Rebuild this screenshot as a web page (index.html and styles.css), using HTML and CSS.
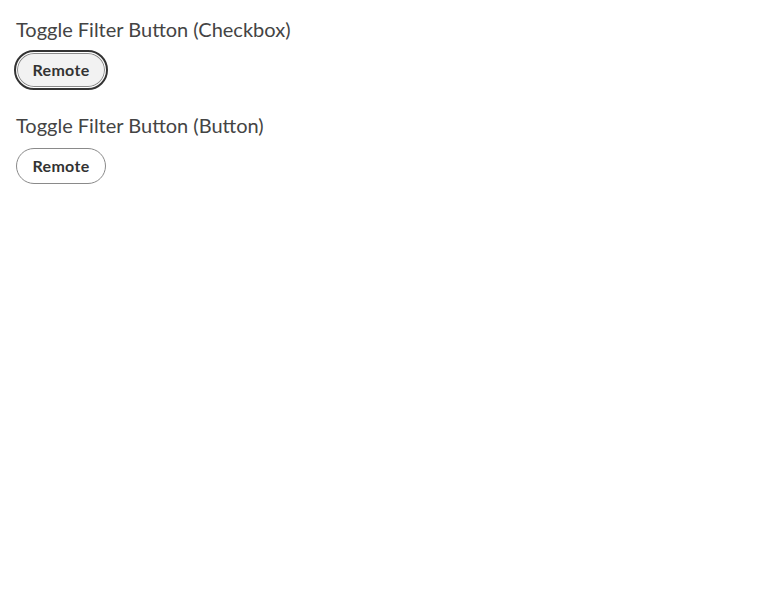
FILE: index.html
```html
<!DOCTYPE html>
<html lang="en">
<head>
<meta charset="utf-8">
<title>Toggle Filter Button</title>
<link rel="stylesheet" href="styles.css">
</head>
<body>
  <section class="demo">
    <h2 class="demo-title">Toggle Filter Button (Checkbox)</h2>
    <label class="toggle toggle--checked">
      <input type="checkbox" class="toggle-input" checked>
      <span class="toggle-label">Remote</span>
    </label>
  </section>
  <section class="demo">
    <h2 class="demo-title">Toggle Filter Button (Button)</h2>
    <button type="button" class="toggle">
      <span class="toggle-label">Remote</span>
    </button>
  </section>
</body>
</html>
```
FILE: styles.css
```css
html, body {
  margin: 0;
  padding: 0;
  background: #fff;
}
body {
  padding: 15px 16px 16px;
  font-family: Lato, "Liberation Sans", sans-serif;
  color: #333;
  display: flex;
  flex-direction: column;
  gap: 23px;
}
.demo {
  display: flex;
  flex-direction: column;
  align-items: flex-start;
  gap: 9px;
}
.demo-title {
  margin: 0;
  font-size: 20px;
  line-height: 28px;
  font-weight: 400;
  color: #444;
}
.toggle {
  box-sizing: border-box;
  width: 90px;
  height: 36px;
  display: inline-flex;
  align-items: center;
  justify-content: center;
  border: 1px solid #8a8a8a;
  border-radius: 18px;
  background: #fff;
  font-family: inherit;
  font-size: 16px;
  font-weight: 700;
  letter-spacing: 0.3px;
  color: #333;
  padding: 0 0 2px;
  cursor: pointer;
}
.toggle-input {
  position: absolute;
  opacity: 0;
  width: 0;
  height: 0;
  margin: 0;
}
.toggle--checked {
  background: #f2f2f2;
  border-color: #fff;
  box-shadow: inset 0 0 0 1px #8a8a8a;
  outline: 2px solid #333;
  outline-offset: 0;
}
```
